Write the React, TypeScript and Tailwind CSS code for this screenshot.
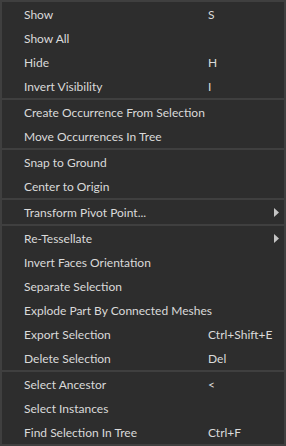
type Item = { label: string; shortcut?: string; submenu?: boolean };

const sections: Item[][] = [
  [
    { label: "Show", shortcut: "S" },
    { label: "Show All" },
    { label: "Hide", shortcut: "H" },
    { label: "Invert Visibility", shortcut: "I" },
  ],
  [{ label: "Create Occurrence From Selection" }, { label: "Move Occurrences In Tree" }],
  [{ label: "Snap to Ground" }, { label: "Center to Origin" }],
  [{ label: "Transform Pivot Point...", submenu: true }],
  [
    { label: "Re-Tessellate", submenu: true },
    { label: "Invert Faces Orientation" },
    { label: "Separate Selection" },
    { label: "Explode Part By Connected Meshes" },
    { label: "Export Selection", shortcut: "Ctrl+Shift+E" },
    { label: "Delete Selection", shortcut: "Del" },
  ],
  [
    { label: "Select Ancestor", shortcut: "<" },
    { label: "Select Instances" },
    { label: "Find Selection In Tree", shortcut: "Ctrl+F" },
  ],
];

function Row({ item }: { item: Item }) {
  return (
    <div className="relative flex h-6 items-center whitespace-nowrap pt-px">
      <span className="w-[206px] shrink-0 pl-[22px]">{item.label}</span>
      {item.shortcut && <span>{item.shortcut}</span>}
      {item.submenu && (
        <svg className="absolute right-[5px] top-2" width="5" height="9" viewBox="0 0 5 9">
          <path d="M0 0 L5 4.5 L0 9 Z" fill="#c4c4c4" />
        </svg>
      )}
    </div>
  );
}

export default function App() {
  return (
    <div
      className="flex h-[446px] w-[286px] flex-col border-2 border-[#3f3f3f] bg-[#2d2d2d] text-[12px] text-[#dadada]"
      style={{ fontFamily: '"Segoe UI", "Lato", "Open Sans", sans-serif' }}
    >
      {sections.map((sec, i) => (
        <div key={i} className={i > 0 ? "border-t-2 border-[#3f3f3f]" : ""}>
          {sec.map((item) => (
            <Row key={item.label} item={item} />
          ))}
        </div>
      ))}
    </div>
  );
}
